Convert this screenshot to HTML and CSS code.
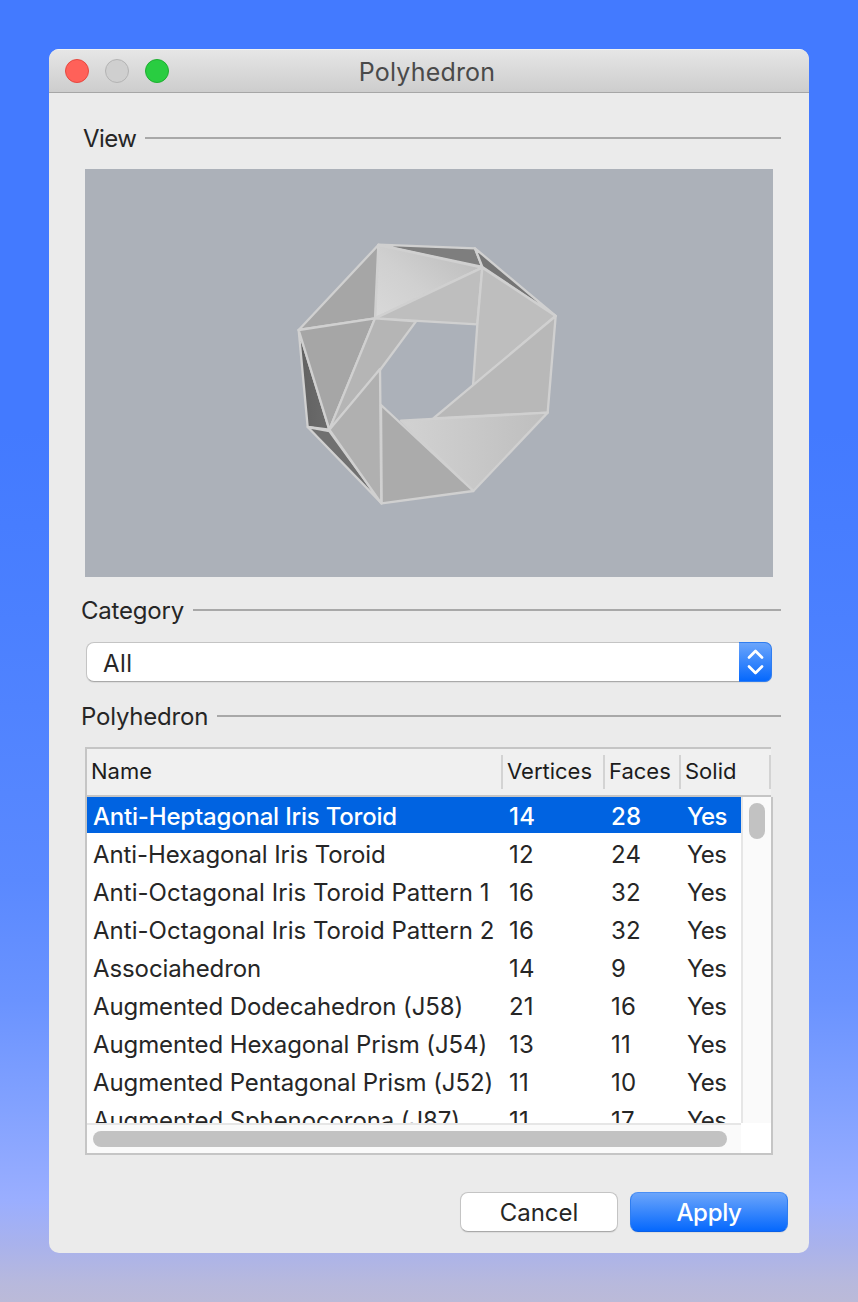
FILE: index.html
```
<!DOCTYPE html>
<html lang="en">
<head>
<meta charset="utf-8">
<title>Polyhedron</title>
<link rel="stylesheet" href="styles.css">
</head>
<body>
<main class="window">
  <header class="titlebar">
    <div class="lights"><i class="light red"></i><i class="light off"></i><i class="light green"></i></div>
    <h1 class="title"><span>Polyhedron</span></h1>
  </header>
  <div class="group group-view"><span>View</span></div>
  <div class="viewport">
    <svg class="model" viewBox="0 0 688 408">
      <defs>
        <linearGradient id="top" x1="0" y1="1" x2="1" y2="0.2"><stop offset="0" stop-color="#d9d9d9"/><stop offset=".45" stop-color="#d0d0d0"/><stop offset="1" stop-color="#bdbdbd"/></linearGradient>
        <linearGradient id="low"><stop offset="0" stop-color="#d2d2d2"/><stop offset="1" stop-color="#bebebe"/></linearGradient>
        <linearGradient id="left"><stop offset="0" stop-color="#616161"/><stop offset="1" stop-color="#6c6c6c"/></linearGradient>
      </defs>
      <g transform="translate(195 56) scale(.33333)" stroke="#d0d0d0" stroke-width="7" stroke-linejoin="round">
        <path fill="#7e7e7e" d="M295 59 585 70 607 126Z"/>
        <path fill="#747474" d="M585 70 827 273 607 126Z"/>
        <path fill="url(#left)" d="M56 315 148 614 83 606Z"/>
        <path fill="#707070" d="M83 606 148 618 305 835Z"/>
        <path fill="url(#top)" d="M295 60 607 128 285 280Z"/>
        <path fill="#bebebe" d="M285 280 607 128 592 298Z"/>
        <path fill="#a6a6a6" d="M295 60 285 280 56 315Z"/>
        <path fill="#a6a6a6" d="M56 315 285 280 148 614Z"/>
        <path fill="#b5b5b5" d="M285 280 408 289 300 435 148 614Z"/>
        <path fill="#b0b0b0" d="M148 614 300 432 304 835Z"/>
        <path fill="#bebebe" d="M607 128 827 273 579 483 592 298Z"/>
        <path fill="#b8b8b8" d="M827 273 803 563 460 580Z"/>
        <path fill="url(#low)" d="M363 587 803 563 580 798Z"/>
        <path fill="#ababab" d="M303 540 580 798 305 835Z"/>
      </g>
    </svg>
  </div>
  <div class="group group-category"><span>Category</span></div>
  <div class="select"><span class="select-value">All</span>
    <span class="stepper"><svg width="18" height="26" viewBox="0 0 18 26" fill="none" stroke="#fff" stroke-width="2.7" stroke-linecap="round" stroke-linejoin="round"><path d="M3 8.5 9.5 2 16 8.5M3 17.5 9.5 24 16 17.5"/></svg></span>
  </div>
  <div class="group group-list"><span>Polyhedron</span></div>
  <section class="table">
    <div class="thead"><span>Name</span><span>Vertices</span><span>Faces</span><span>Solid</span></div>
    <div class="content">
      <div class="rows">
        <div class="row selected"><span>Anti-Heptagonal Iris Toroid</span><span>14</span><span>28</span><span>Yes</span></div>
        <div class="row"><span>Anti-Hexagonal Iris Toroid</span><span>12</span><span>24</span><span>Yes</span></div>
        <div class="row pattern"><span>Anti-Octagonal Iris Toroid Pattern 1</span><span>16</span><span>32</span><span>Yes</span></div>
        <div class="row pattern"><span>Anti-Octagonal Iris Toroid Pattern 2</span><span>16</span><span>32</span><span>Yes</span></div>
        <div class="row"><span>Associahedron</span><span>14</span><span>9</span><span>Yes</span></div>
        <div class="row"><span>Augmented Dodecahedron (J58)</span><span>21</span><span>16</span><span>Yes</span></div>
        <div class="row"><span>Augmented Hexagonal Prism (J54)</span><span>13</span><span>11</span><span>Yes</span></div>
        <div class="row"><span>Augmented Pentagonal Prism (J52)</span><span>11</span><span>10</span><span>Yes</span></div>
        <div class="row"><span>Augmented Sphenocorona (J87)</span><span>11</span><span>17</span><span>Yes</span></div>
      </div>
      <div class="vscroll"><i></i></div>
      <div class="hscroll"><i></i></div>
      <div class="corner"></div>
    </div>
  </section>
  <footer class="actions"><button class="button">Cancel</button><button class="button primary">Apply</button></footer>
</main>
</body>
</html>
```

FILE: styles.css
```
* { box-sizing: border-box; }
body {
  margin: 0;
  height: 1302px;
  padding: 49px;
  overflow: hidden;
  font-family: Inter, "Liberation Sans", sans-serif;
  font-size: 24px;
  color: #262626;
  background: linear-gradient(#437aff 0, #437aff 430px, #4b80ff 620px, #5a89ff 880px, #6a93ff 1000px, #83a2ff 1110px, #9aaeff 1200px, #a9b2ec 1245px, #b8b9dc 1285px, #bbbad8 1302px);
}
.window {
  width: 760px;
  height: 1204px;
  border-radius: 10px;
  overflow: hidden;
  background: #ebebeb;
  display: flex;
  flex-direction: column;
}
.titlebar {
  height: 44px;
  flex: none;
  display: grid;
  grid-template-columns: 136px 1fr 140px;
  background: linear-gradient(#e6e6e6, #cdcdcd);
  border-top: 1px solid #f2f2f2;
  border-bottom: 1px solid #a6a6a6;
}
.lights { display: flex; gap: 16px; padding: 9px 0 0 16px; }
.light { width: 24px; height: 24px; border-radius: 50%; border: 1px solid; flex: none; }
.red { background: #ff6159; border-color: #e5483f; }
.off { background: #cfcfcf; border-color: #b3b3b3; }
.green { background: #29cd41; border-color: #1eae30; }
.title { margin: 0; text-align: center; font-size: 25px; font-weight: 400; line-height: 45px; letter-spacing: .2px; color: #4a4a4a; }
.group { display: flex; align-items: center; height: 32px; flex: none; line-height: 30px; margin: 0 28px 0 32px; letter-spacing: -.2px; }
.group span { padding-top: 2px; }
.group::after { content: ""; height: 2px; flex: 1; margin-left: 9px; background: #a8a8a8; }
.group-view { margin-top: 29px; margin-left: 34px; letter-spacing: -.6px; }
.viewport { height: 408px; margin: 15px 36px 0; flex: none; background: #acb1b9; }
.model { display: block; width: 688px; height: 408px; }
.group-category { margin-top: 17px; }
.select {
  display: flex;
  align-items: stretch;
  width: 686px;
  height: 40px;
  flex: none;
  margin: 16px 0 0 37px;
  border-radius: 8px;
  border: 1px solid #c4c4c4;
  border-bottom-color: #a9a9a9;
  background: #fff;
  box-shadow: 0 1px 1px #0001;
}
.select-value { flex: 1; padding-left: 16px; line-height: 42px; letter-spacing: .5px; }
.stepper {
  width: 33px;
  margin: -1px;
  display: flex;
  align-items: center;
  justify-content: center;
  border-radius: 0 7px 7px 0;
  background: linear-gradient(#6ba5fb, #0568fd);
  border: 1px solid #2f7df0;
  border-width: 1px 1px 1px 0;
}
.group-list { margin-top: 18px; }
.table {
  width: 688px;
  height: 408px;
  margin: 15px 0 0 36px;
  flex: none;
  border-left: 2px solid #c5c5c5;
}
.thead {
  width: 684px;
  height: 50px;
  border: solid #c5c5c5;
  border-width: 2px 0;
  background: #f0f0f0;
  display: grid;
  grid-template-columns: 416px 102px 76px 90px;
  padding: 6px 0;
  font-size: 22px;
  color: #1c1c1c;
}
.thead span { height: 34px; line-height: 33px; padding-left: 4px; border-right: 2px solid #d3d3d3; }
.content {
  height: 358px;
  display: grid;
  grid-template: 326px 30px / 654px 30px;
  border: solid #c5c5c5;
  border-width: 0 2px 2px 0;
  background: #fff;
}
.rows { overflow: hidden; }
.row { display: grid; grid-template-columns: 416px 102px 76px 60px; height: 36px; margin-bottom: 2px; line-height: 39px; letter-spacing: .2px; }
.row span { padding-left: 6px; white-space: nowrap; }
.row span:first-child { letter-spacing: -.1px; }
.row span:last-child { letter-spacing: -.6px; }
.row.pattern span:first-child { letter-spacing: .03px; }
.row.selected span:first-child { letter-spacing: -.2px; }
.selected { background: #0063e1; color: #fff; font-weight: 500; }
.vscroll { background: #fafafa; border-left: 2px solid #e6e6e6; padding: 6px; }
.vscroll i { display: block; width: 16px; height: 36px; border-radius: 8px; background: #c2c2c2; }
.hscroll { background: #fafafa; border-top: 2px solid #e6e6e6; padding: 6px; }
.hscroll i { display: block; width: 634px; height: 16px; border-radius: 8px; background: #c2c2c2; }
.actions { display: flex; gap: 12px; margin: 37px 21px 0 411px; }
.button {
  width: 158px;
  height: 40px;
  padding: 1px 0 0;
  font: inherit;
  color: #262626;
  background: #fff;
  border: 1px solid #c4c4c4;
  border-bottom-color: #a9a9a9;
  border-radius: 8px;
  box-shadow: 0 1px 1px #0001;
}
.primary { color: #fff; font-weight: 500; letter-spacing: -.3px; background: linear-gradient(#6ba5fb, #0568fd); border-color: #4a8ff5 #2f7df0 #0a5fe6; }
```
